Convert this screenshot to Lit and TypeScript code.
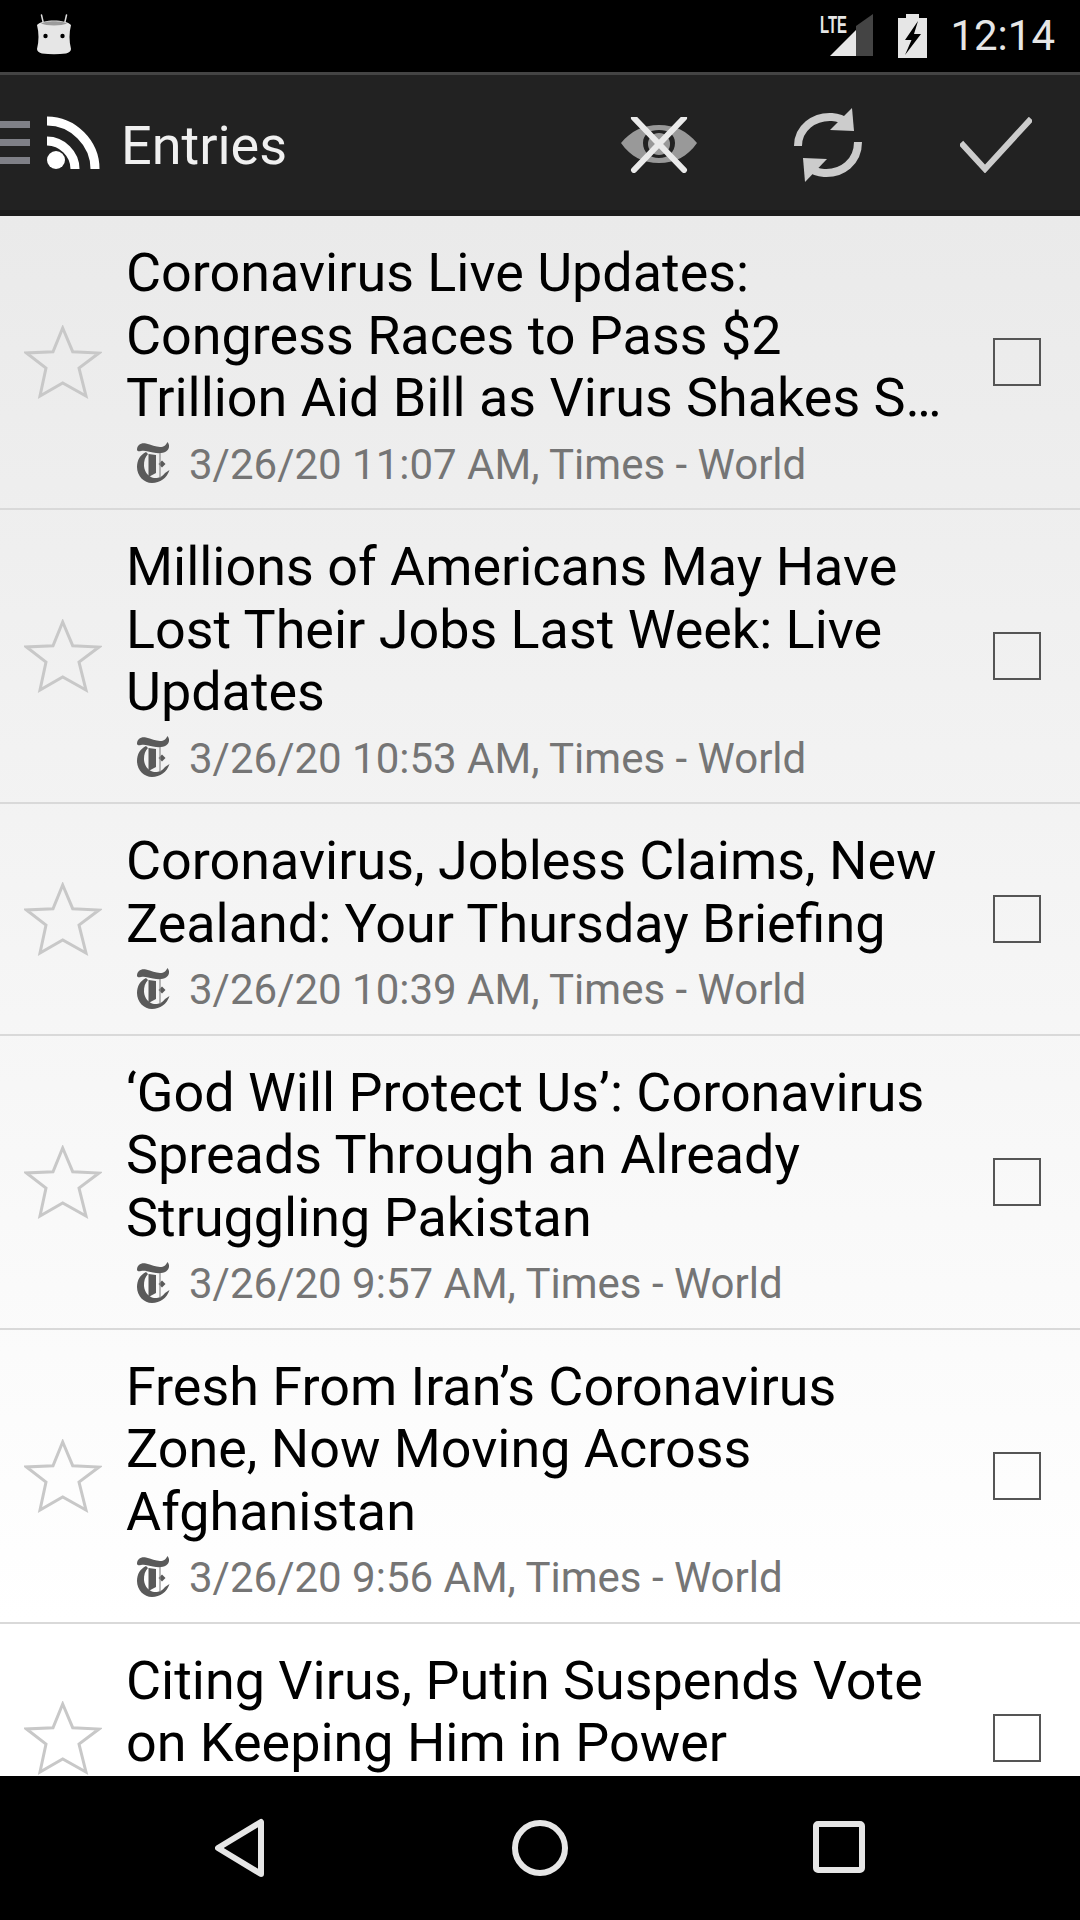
import { LitElement, css, html, svg } from "lit";
import { customElement } from "lit/decorators.js";

// the last row is cut by the nav bar before its date line shows, so it has no date
const ENTRIES = [
  { title: "Coronavirus Live Updates: Congress Races to Pass $2 Trillion Aid Bill as Virus Shakes S…", date: "3/26/20 11:07 AM" },
  { title: "Millions of Americans May Have Lost Their Jobs Last Week: Live Updates", date: "3/26/20 10:53 AM" },
  { title: "Coronavirus, Jobless Claims, New Zealand: Your Thursday Briefing", date: "3/26/20 10:39 AM" },
  { title: "‘God Will Protect Us’: Coronavirus Spreads Through an Already Struggling Pakistan", date: "3/26/20 9:57 AM" },
  { title: "Fresh From Iran’s Coronavirus Zone, Now Moving Across Afghanistan", date: "3/26/20 9:56 AM" },
  { title: "Citing Virus, Putin Suspends Vote on Keeping Him in Power", date: "" },
];

const nytLogo = svg`<svg class="nyt" width="36" height="44" viewBox="0 0 36 44">
  <g fill="#5a5a5a">
    <path d="M1 8C1 3 5 0.500 10 1.500C15 2.500 20 5 24 5C28 5 30 3 31.500 0C34 3 33.500 7 30 9.500C27 11.500 22 11.500 17 10.500C13 9.500 8 8 5 9C3 9.500 1.500 9.500 1 8Z" />
    <path d="M10 10C4 13 1 18 1 25C1 34 8 41 16 41C24 41 31 36 33.500 28L29 31C27 34.500 22 36.500 18 36C12.500 35 8.500 30 8 24C7.800 19 9 15 12 12Z" />
    <path d="M12.500 12L20 13V31L12.500 35Z" />
    <path d="M26 18.500L29.500 22L26 25.500L22.500 22Z" />
  </g>
  <path d="M24 11V36" stroke="#8a8a8a" stroke-width="1.200" fill="none" />
</svg>`;

@customElement("app-root")
export class AppRoot extends LitElement {
  static styles = css`
    :host {
      display: flex;
      flex-direction: column;
      width: 1080px;
      height: 1920px;
      overflow: hidden;
      font-family: Roboto, sans-serif;
      background: #000;
    }
    .status {
      display: flex;
      align-items: center;
      height: 72px;
      padding: 0 25px 0 36px;
      background: #000;
      color: #e6e6e6;
      box-sizing: border-box;
    }
    .status .spacer {
      flex: 1;
    }
    .android {
      margin-top: -4px;
    }
    .lte {
      margin-right: 24px;
    }
    .clock {
      margin-left: 23px;
      font-size: 42px;
      line-height: 72px;
    }
    .bar {
      display: flex;
      align-items: center;
      height: 144px;
      box-sizing: border-box;
      background: #222;
      border-top: 3px solid #444;
      border-bottom: 6px solid #1b1b1b;
    }
    .burger {
      display: flex;
      flex-direction: column;
      gap: 11px;
      width: 30px;
      margin-right: 17px;
    }
    .burger i {
      display: block;
      height: 7px;
      background: #7f8087;
    }
    .title {
      flex: 1;
      margin-left: 21px;
      padding-top: 6px;
      font-size: 54px;
      color: #f0f0f0;
    }
    .actions {
      display: flex;
      align-items: center;
      margin-right: 48px;
      padding-top: 4px;
    }
    .actions svg {
      display: block;
    }
    .eye {
      margin-right: 97px;
    }
    .sync {
      margin-right: 98px;
    }
    .list {
      flex: 1;
      min-height: 0;
      overflow: hidden;
      background: linear-gradient(#eaeaea, #fff 90%);
    }
    .row {
      display: flex;
      align-items: center;
      border-bottom: 2px solid #d9d9d9;
    }
    .star {
      flex: none;
      width: 127px;
      padding-left: 24px;
      box-sizing: border-box;
    }
    .star svg {
      display: block;
    }
    .body {
      flex: none;
      width: 846px;
      box-sizing: border-box;
      padding: 26px 26px 9.500px 0;
    }
    .head {
      font-size: 53.900px;
      line-height: 62.500px;
      margin-left: -1px;
      color: #000;
      display: -webkit-box;
      -webkit-box-orient: vertical;
      -webkit-line-clamp: 3;
      overflow: hidden;
    }
    .meta {
      display: flex;
      align-items: center;
      height: 69px;
      font-size: 42px;
      color: #757575;
      white-space: nowrap;
    }
    .nyt {
      margin: 0 17px 0 9px;
      flex: none;
    }
    .check {
      flex: none;
      width: 48px;
      height: 48px;
      margin-left: 20px;
      box-sizing: border-box;
      border: 2px solid #555;
    }
    .nav {
      display: flex;
      align-items: center;
      justify-content: center;
      height: 144px;
      background: #000;
    }
    .nav svg {
      display: block;
    }
  `;

  render() {
    return html`
      <div class="status">
        <svg class="android" width="36" height="42" viewBox="0 0 36 42">
          <path d="M8 13L5.500 2M28 13L30.500 2" stroke="#ddd" stroke-width="1.500" stroke-linecap="round" />
          <path fill="#e6e6e6" d="M1 12C6 6 30 6 35 12C33 20 33 28 35 36C35 38 33 40 30 40.500C22 41.500 14 41.500 6 40.500C3 40 1 38 1 36C3 28 3 20 1 12Z" />
          <path fill="#9b9b9b" d="M5 10.500C10 7.500 26 7.500 31 10.500C26 13 10 13 5 10.500Z" />
          <circle cx="9.500" cy="23" r="2.200" fill="#000" />
          <circle cx="26.500" cy="23" r="2.200" fill="#000" />
        </svg>
        <div class="spacer"></div>
        <svg class="lte" width="54" height="56" viewBox="0 -6 54 56">
          <path fill="#444" d="M36 12L53 0V42H36Z" />
          <path fill="#e6e6e6" d="M10 42L36 16V42Z" />
          <text x="0" y="19" font-family="Liberation Sans, sans-serif" font-weight="700" font-size="24" fill="#e6e6e6" textLength="27" lengthAdjust="spacingAndGlyphs">LTE</text>
        </svg>
        <svg width="29" height="44" viewBox="0 0 29 44">
          <path fill="#e6e6e6" d="M0 4H8V0H21V4H29V44H0Z" />
          <path fill="#000" d="M20 7L7 26H13.500L7 41L23 20H16Z" />
        </svg>
        <div class="clock">12:14</div>
      </div>
      <div class="bar">
        <div class="burger"><i></i><i></i><i></i></div>
        <svg width="53" height="53" viewBox="0 0 53 53">
          <circle cx="9" cy="44" r="9" fill="#fff" />
          <path fill="none" stroke="#fff" stroke-width="9" d="M0 25C15 25 28 38 28 53" />
          <path fill="none" stroke="#fff" stroke-width="9" d="M0 5C26 5 48 27 48 53" />
        </svg>
        <div class="title">Entries</div>
        <div class="actions">
          <svg class="eye" width="76" height="56" viewBox="0 0 76 56">
            <path fill="#999" fill-rule="evenodd" d="M0 26C10 14 22 8 38 8C54 8 66 14 76 26C66 40 54 46 38 46C22 46 10 40 0 26ZM22 26C22 35 29 41 38 41C47 41 54 35 54 26C54 17 47 13 38 13C29 13 22 17 22 26Z" />
            <circle cx="38" cy="27" r="11" fill="#999" />
            <path d="M13 1L63 53M63 1L13 53" stroke="#eaeaea" stroke-width="6" stroke-linecap="round" />
          </svg>
          <svg class="sync" width="68" height="74" viewBox="0 0 68 74">
            <path fill="none" stroke="#ccc" stroke-width="8" d="M4 38C4 20 20 8 38 9C45 9.500 50 12 54 15" />
            <path fill="#ccc" d="M58 0L60 23L36 22Z" />
            <path fill="none" stroke="#ccc" stroke-width="8" d="M64 34C64 54 48 66 30 65C23 64.500 18 62 14 59" />
            <path fill="#ccc" d="M11 74L9 50L33 51Z" />
          </svg>
          <svg width="72" height="56" viewBox="0 0 72 56">
            <path fill="none" stroke="#ccc" stroke-width="6" stroke-linecap="square" d="M3 28L25 52L69 4" />
          </svg>
        </div>
      </div>
      <div class="list">
        ${ENTRIES.map(
          (e) => html`
            <div class="row">
              <div class="star">
                <svg width="78" height="74" viewBox="0 0 78 74">
                  <path fill="none" stroke="#c8c8c8" stroke-width="3" d="M38.700 3L48.700 26.700L75 28L55 43L62 71L38.700 58L16 71L22 43L2.500 28L29 26.700Z" />
                </svg>
              </div>
              <div class="body">
                <div class="head">${e.title}</div>
                <div class="meta">${e.date ? html`${nytLogo}${e.date}, Times - World` : ""}</div>
              </div>
              <div class="check"></div>
            </div>
          `,
        )}
      </div>
      <div class="nav">
        <svg width="650" height="60" viewBox="0 0 650 60">
          <path fill="none" stroke="#e6e6e6" stroke-width="6" stroke-linejoin="round" d="M46 4V56L3 30Z" />
          <circle cx="325" cy="30" r="25" fill="none" stroke="#e6e6e6" stroke-width="6" />
          <rect x="601" y="6" width="46" height="46" rx="2" fill="none" stroke="#e6e6e6" stroke-width="6" />
        </svg>
      </div>
    `;
  }
}
